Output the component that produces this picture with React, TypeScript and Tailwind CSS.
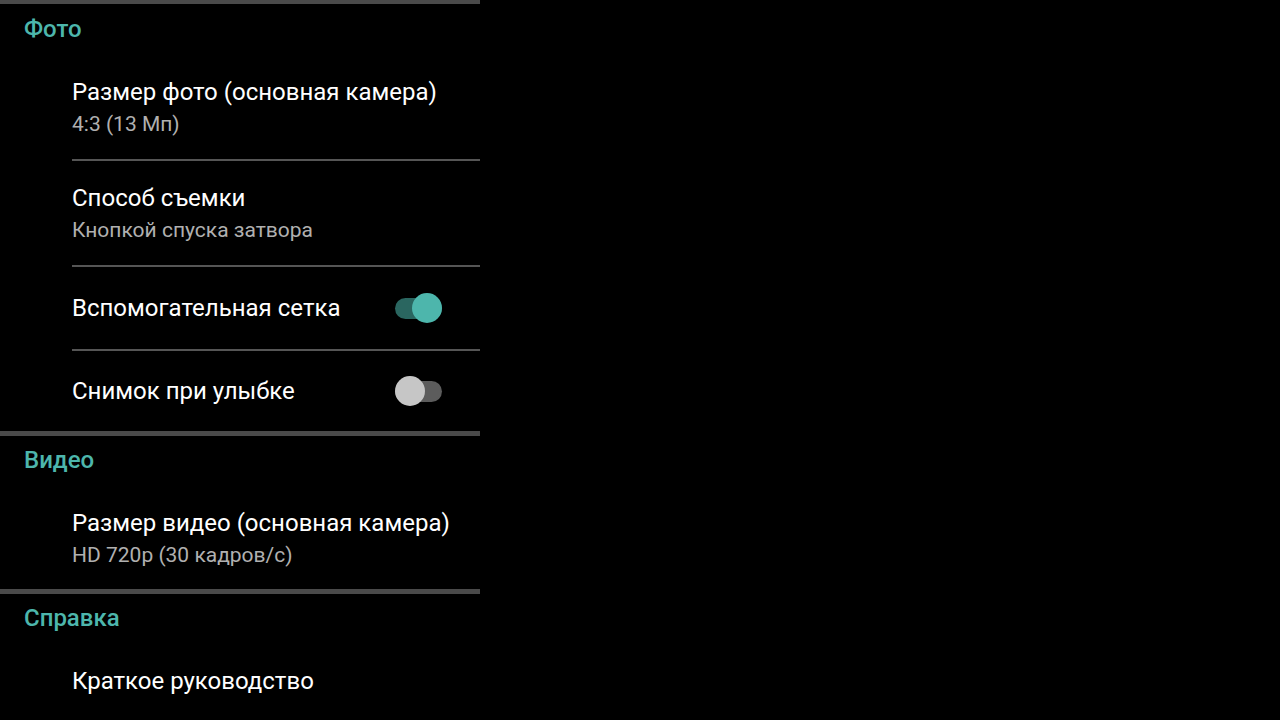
import React from "react";

type Row =
  | { kind: "two"; title: string; sub: string; h: string }
  | { kind: "switch"; title: string; on: boolean; h: string }
  | { kind: "one"; title: string; h: string };

const sections: { name: string; rows: Row[] }[] = [
  {
    name: "Фото",
    rows: [
      { kind: "two", title: "Размер фото (основная камера)", sub: "4:3 (13 Мп)", h: "h-[104px]" },
      { kind: "two", title: "Способ съемки", sub: "Кнопкой спуска затвора", h: "h-[104px]" },
      { kind: "switch", title: "Вспомогательная сетка", on: true, h: "h-[82px]" },
      { kind: "switch", title: "Снимок при улыбке", on: false, h: "h-[80px]" },
    ],
  },
  {
    name: "Видео",
    rows: [
      { kind: "two", title: "Размер видео (основная камера)", sub: "HD 720p (30 кадров/с)", h: "h-[103px]" },
    ],
  },
  {
    name: "Справка",
    rows: [{ kind: "one", title: "Краткое руководство", h: "h-[74px]" }],
  },
];

function Toggle({ on }: { on: boolean }) {
  return (
    <div className="relative w-[47px] h-[30px] mr-[38px] shrink-0">
      <div
        className={`absolute left-0 top-[5px] h-[21px] w-[47px] rounded-full ${
          on ? "bg-[#2a6660]" : "bg-[#5c5c5c]"
        }`}
      />
      <div
        className={`absolute top-0 h-[30px] w-[30px] rounded-full ${
          on ? "left-[17px] bg-[#4db6ac]" : "left-0 bg-[#c6c6c6]"
        }`}
      />
    </div>
  );
}

function SettingRow({ row }: { row: Row }) {
  if (row.kind === "two") {
    return (
      <div className={`${row.h} pl-[72px] pt-[2px] flex flex-col justify-center`}>
        <div className="text-[24px] leading-[32px] text-white">{row.title}</div>
        <div className="text-[21px] leading-[32px] text-[#b0b0b0]">{row.sub}</div>
      </div>
    );
  }
  if (row.kind === "switch") {
    return (
      <div className={`${row.h} pl-[72px] flex items-center justify-between`}>
        <div className="text-[24px] leading-[32px] text-white">{row.title}</div>
        <Toggle on={row.on} />
      </div>
    );
  }
  return (
    <div className={`${row.h} pl-[72px] flex items-center`}>
      <div className="text-[24px] leading-[32px] text-white">{row.title}</div>
    </div>
  );
}

export default function App() {
  return (
    <div
      className="w-[1280px] h-[720px] bg-black overflow-hidden"
      style={{ fontFamily: "Roboto, 'Noto Sans', sans-serif" }}
    >
      <div className="w-[480px]">
        {sections.map((s, si) => (
          <div key={s.name}>
            {/* section separator */}
            <div className={`${si === 0 ? "h-[4px]" : "h-[5px]"} bg-[#4a4a4a]`} />
            <div
              className={`${si === 0 ? "h-[51px]" : "h-[50px]"} pl-6 pb-[2px] flex items-center text-[24px] font-medium text-[#4db6ac]`}
            >
              {s.name}
            </div>
            {s.rows.map((r, ri) => (
              <div key={r.title}>
                <SettingRow row={r} />
                {ri < s.rows.length - 1 && <div className="ml-[72px] h-[2px] bg-[#555555]" />}
              </div>
            ))}
          </div>
        ))}
      </div>
    </div>
  );
}
